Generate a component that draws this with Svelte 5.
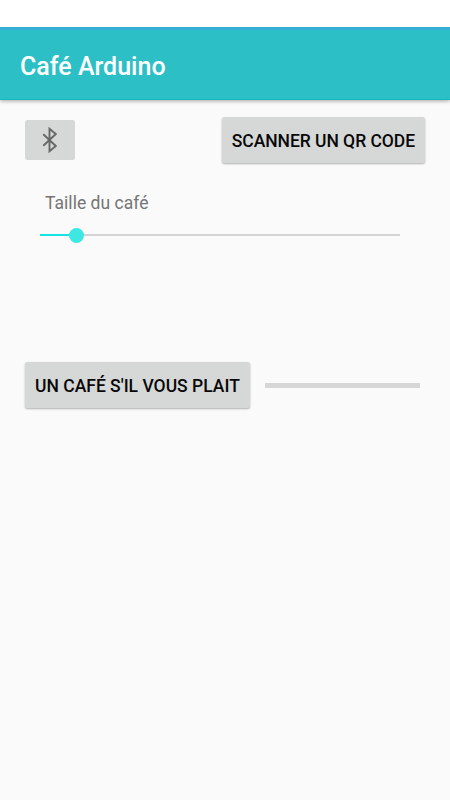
<script>
  let size = $state(10);
  let progress = $state(0);
</script>

<div class="screen">
  <div class="status-bar"></div>
  <header>
    <h1>Café Arduino</h1>
  </header>

  <main>
    <div class="row">
      <button class="icon-btn" aria-label="Bluetooth">
        <svg viewBox="0 0 30 30" width="30" height="30">
          <path
            fill="none"
            stroke="#666766"
            stroke-width="1.9"
            d="M8.3 9.2 20.8 21l-6.3 5.2V3.8L20.8 9 8.3 20.8"
          />
        </svg>
      </button>
      <button class="btn scan">SCANNER UN QR CODE</button>
    </div>

    <p class="label">Taille du café</p>
    <div class="slider">
      <div class="filled" style="width: {size}%"></div>
      <div class="thumb"></div>
      <div class="rest"></div>
    </div>

    <div class="row order">
      <button class="btn">UN CAFÉ S'IL VOUS PLAIT</button>
      <div class="progress">
        <div class="bar" style="width: {progress}%"></div>
      </div>
    </div>
  </main>
</div>

<style>
  :global(body) {
    margin: 0;
  }

  .screen {
    width: 450px;
    height: 800px;
    overflow: hidden;
    background: #fafafa;
    font-family: Roboto, sans-serif;
  }

  .status-bar {
    height: 27px;
    background: #fff;
  }

  header {
    box-sizing: border-box;
    height: 73px;
    padding: 5px 20px 0;
    display: flex;
    align-items: center;
    background: #2cc0c6;
    border-top: 3px solid #35add5;
    border-bottom: 1px solid #16b8bd;
    box-shadow: 0 1px 4px rgba(0, 0, 0, 0.35);
    clip-path: inset(0 0 -8px 0);
  }

  h1 {
    margin: 0;
    font-size: 25px;
    font-weight: 500;
    line-height: 30px;
    color: #fff;
  }

  main {
    padding: 17px 25px 0;
  }

  .row {
    display: flex;
    align-items: center;
    justify-content: space-between;
  }

  button {
    border: 0;
    background: #d6d8d7;
    border-radius: 2.5px;
  }

  .icon-btn {
    width: 50px;
    height: 40px;
    padding: 0;
    display: flex;
    align-items: center;
    justify-content: center;
  }

  .btn {
    height: 46px;
    padding: 2px 10px 0;
    font: 500 17.5px Roboto, sans-serif;
    color: #080808;
    white-space: nowrap;
    box-shadow: 0 1px 2px rgba(0, 0, 0, 0.3);
  }

  .scan {
    letter-spacing: -0.05px;
  }

  .label {
    margin: 29px 20px 0;
    font-size: 17.5px;
    line-height: 22px;
    letter-spacing: 0.03px;
    color: #757575;
  }

  .slider {
    display: flex;
    align-items: center;
    height: 16px;
    margin: 13px 25px 0 15px;
  }

  .filled {
    height: 2px;
    background: #14e5e2;
  }

  .thumb {
    flex: none;
    width: 15px;
    height: 15px;
    margin: 0 -7.5px;
    border-radius: 50%;
    background: #3de8e3;
    z-index: 1;
  }

  .rest {
    flex: 1;
    height: 2px;
    background: #d3d3d3;
  }

  .order {
    margin-top: 119px;
  }

  .progress {
    flex: 1;
    height: 5px;
    margin: 0 5px 0 15px;
    background: #d6d6d6;
  }

  .bar {
    height: 100%;
    background: #14e5e2;
  }
</style>
